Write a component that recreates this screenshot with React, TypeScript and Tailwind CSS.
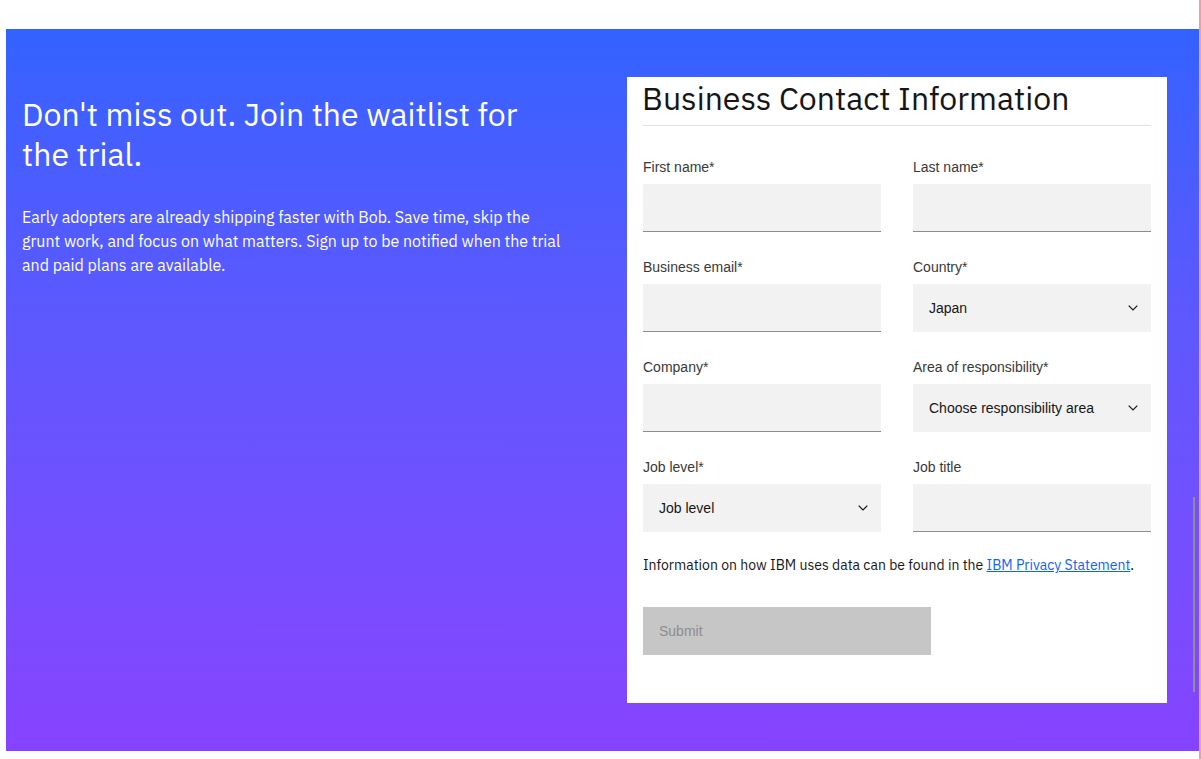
import React from 'react';

const plex = { fontFamily: '"IBM Plex Sans", Roboto, "Liberation Sans", sans-serif' };

function Chevron() {
  return (
    <svg width="10" height="6" viewBox="0 0 10 6" fill="none" className="shrink-0">
      <path d="M0.7 0.7 L5 5 L9.3 0.7" stroke="#161616" strokeWidth="1.2" />
    </svg>
  );
}

function TextField({ label }: { label: string }) {
  return (
    <div className="flex flex-col">
      <label className="text-[14px] leading-[18px] text-[#393939] font-['Liberation_Sans',Arial,sans-serif]">{label}</label>
      <div className="mt-2 h-12 bg-[#f2f2f2] border-b border-[#8d8d8d]" />
    </div>
  );
}

function SelectField({ label, value }: { label: string; value: string }) {
  return (
    <div className="flex flex-col">
      <label className="text-[14px] leading-[18px] text-[#393939] font-['Liberation_Sans',Arial,sans-serif]">{label}</label>
      <div className="mt-2 h-12 bg-[#f2f2f2] flex items-center justify-between pl-4 pr-[13px] font-['Liberation_Sans',Arial,sans-serif] text-[14px] text-[#161616]">
        <span>{value}</span>
        <Chevron />
      </div>
    </div>
  );
}

export default function App() {
  return (
    <div className="relative bg-white h-[759px] w-[1201px] overflow-hidden pt-[29px] pl-[6px] pr-[2px] pb-[8px]">
      <section className="flex h-[722px] bg-gradient-to-b from-[#3162ff] to-[#8643ff]">
        {/* Left intro copy */}
        <div className="w-[621px] pl-4 pt-[65px] text-white" style={plex}>
          <h2 className="w-[546px] text-[32px] leading-[40px] font-normal">
            Don't miss out. Join the waitlist for the trial.
          </h2>
          <p className="mt-[31px] w-[546px] text-[16px] leading-[24px]">
            Early adopters are already shipping faster with Bob. Save time, skip the grunt work, and focus on what matters. Sign up to be notified when the trial and paid plans are available.
          </p>
        </div>

        {/* Form card */}
        <div className="mt-12 w-[540px] h-[626px] bg-white px-4 pt-px" style={plex}>
          <h3 className="text-[32px] leading-[40px] text-[#161616] font-normal -ml-px">Business Contact Information</h3>
          <div className="mt-[7px] border-t border-[#e0e0e0]" />

          <div className="mt-8 grid grid-cols-2 gap-x-8 gap-y-[26px]">
            <TextField label="First name*" />
            <TextField label="Last name*" />
            <TextField label="Business email*" />
            <SelectField label="Country*" value="Japan" />
            <TextField label="Company*" />
            <SelectField label="Area of responsibility*" value="Choose responsibility area" />
            <SelectField label="Job level*" value="Job level" />
            <TextField label="Job title" />
          </div>

          <p className="mt-[23px] text-[14px] leading-[20px] text-[#161616]">
            Information on how IBM uses data can be found in the{' '}
            <a href="#" className="text-[#0f62fe] underline">IBM Privacy Statement</a>.
          </p>

          <button
            disabled
            className="mt-8 w-[288px] h-12 bg-[#c6c6c6] text-left pl-4 text-[14px] text-[#8d8d8d] font-['Liberation_Sans',Arial,sans-serif]"
          >
            Submit
          </button>
        </div>
      </section>

      {/* window edge artifacts */}
      <div className="absolute right-[6px] top-[497px] h-[195px] w-[2px] bg-[#8f8f8f]" />
      <div className="absolute right-0 top-0 h-full w-[2px] bg-[#e8a0a8]" />
    </div>
  );
}
